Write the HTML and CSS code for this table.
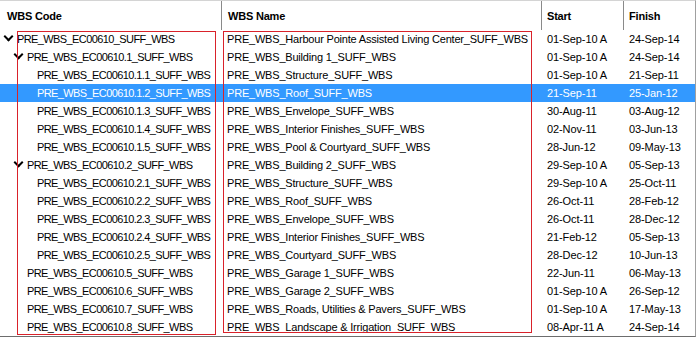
FILE: index.html
```html
<!DOCTYPE html>
<html>
<head>
<meta charset="utf-8">
<link rel="stylesheet" href="styles.css">
</head>
<body>
<div class="grid">
  <div class="head">
    <div class="hcell c1">WBS Code</div>
    <div class="hcell c2">WBS Name</div>
    <div class="hcell c3">Start</div>
    <div class="hcell c4">Finish</div>
  </div>
  <div class="body">
    <div class="row"><div class="cell code l0"><span class="chev"></span>PRE_WBS_EC00610_SUFF_WBS</div><div class="cell name">PRE_WBS_Harbour Pointe Assisted Living Center_SUFF_WBS</div><div class="cell date">01-Sep-10 A</div><div class="cell fin">24-Sep-14</div></div>
    <div class="row"><div class="cell code l1"><span class="chev"></span>PRE_WBS_EC00610.1_SUFF_WBS</div><div class="cell name">PRE_WBS_Building 1_SUFF_WBS</div><div class="cell date">01-Sep-10 A</div><div class="cell fin">24-Sep-14</div></div>
    <div class="row"><div class="cell code l2">PRE_WBS_EC00610.1.1_SUFF_WBS</div><div class="cell name">PRE_WBS_Structure_SUFF_WBS</div><div class="cell date">01-Sep-10 A</div><div class="cell fin">21-Sep-11</div></div>
    <div class="row sel"><div class="cell code l2">PRE_WBS_EC00610.1.2_SUFF_WBS</div><div class="cell name">PRE_WBS_Roof_SUFF_WBS</div><div class="cell date">21-Sep-11</div><div class="cell fin">25-Jan-12</div></div>
    <div class="row"><div class="cell code l2">PRE_WBS_EC00610.1.3_SUFF_WBS</div><div class="cell name">PRE_WBS_Envelope_SUFF_WBS</div><div class="cell date">30-Aug-11</div><div class="cell fin">03-Aug-12</div></div>
    <div class="row"><div class="cell code l2">PRE_WBS_EC00610.1.4_SUFF_WBS</div><div class="cell name">PRE_WBS_Interior Finishes_SUFF_WBS</div><div class="cell date">02-Nov-11</div><div class="cell fin">03-Jun-13</div></div>
    <div class="row"><div class="cell code l2">PRE_WBS_EC00610.1.5_SUFF_WBS</div><div class="cell name">PRE_WBS_Pool &amp; Courtyard_SUFF_WBS</div><div class="cell date">28-Jun-12</div><div class="cell fin">09-May-13</div></div>
    <div class="row"><div class="cell code l1"><span class="chev"></span>PRE_WBS_EC00610.2_SUFF_WBS</div><div class="cell name">PRE_WBS_Building 2_SUFF_WBS</div><div class="cell date">29-Sep-10 A</div><div class="cell fin">05-Sep-13</div></div>
    <div class="row"><div class="cell code l2">PRE_WBS_EC00610.2.1_SUFF_WBS</div><div class="cell name">PRE_WBS_Structure_SUFF_WBS</div><div class="cell date">29-Sep-10 A</div><div class="cell fin">25-Oct-11</div></div>
    <div class="row"><div class="cell code l2">PRE_WBS_EC00610.2.2_SUFF_WBS</div><div class="cell name">PRE_WBS_Roof_SUFF_WBS</div><div class="cell date">26-Oct-11</div><div class="cell fin">28-Feb-12</div></div>
    <div class="row"><div class="cell code l2">PRE_WBS_EC00610.2.3_SUFF_WBS</div><div class="cell name">PRE_WBS_Envelope_SUFF_WBS</div><div class="cell date">26-Oct-11</div><div class="cell fin">28-Dec-12</div></div>
    <div class="row"><div class="cell code l2">PRE_WBS_EC00610.2.4_SUFF_WBS</div><div class="cell name">PRE_WBS_Interior Finishes_SUFF_WBS</div><div class="cell date">21-Feb-12</div><div class="cell fin">05-Sep-13</div></div>
    <div class="row"><div class="cell code l2">PRE_WBS_EC00610.2.5_SUFF_WBS</div><div class="cell name">PRE_WBS_Courtyard_SUFF_WBS</div><div class="cell date">28-Dec-12</div><div class="cell fin">10-Jun-13</div></div>
    <div class="row"><div class="cell code l1">PRE_WBS_EC00610.5_SUFF_WBS</div><div class="cell name">PRE_WBS_Garage 1_SUFF_WBS</div><div class="cell date">22-Jun-11</div><div class="cell fin">06-May-13</div></div>
    <div class="row"><div class="cell code l1">PRE_WBS_EC00610.6_SUFF_WBS</div><div class="cell name">PRE_WBS_Garage 2_SUFF_WBS</div><div class="cell date">01-Sep-10 A</div><div class="cell fin">26-Sep-12</div></div>
    <div class="row"><div class="cell code l1">PRE_WBS_EC00610.7_SUFF_WBS</div><div class="cell name">PRE_WBS_Roads, Utilities &amp; Pavers_SUFF_WBS</div><div class="cell date">01-Sep-10 A</div><div class="cell fin">17-May-13</div></div>
    <div class="row"><div class="cell code l1">PRE_WBS_EC00610.8_SUFF_WBS</div><div class="cell name">PRE_WBS_Landscape &amp; Irrigation_SUFF_WBS</div><div class="cell date">08-Apr-11 A</div><div class="cell fin">24-Sep-14</div></div>
    <div class="mark mark-code"></div>
    <div class="mark mark-name"></div>
  </div>
</div>
</body>
</html>
```

FILE: styles.css
```css
* { box-sizing: border-box; }
html, body { margin: 0; padding: 0; background: #fff; }
body {
  width: 696px;
  height: 337px;
  overflow: hidden;
  font-family: "Liberation Sans", Arial, sans-serif;
  font-size: 11px;
  letter-spacing: -0.2px;
  color: #000;
}
.grid {
  width: 696px;
  height: 337px;
  border-top: 1px solid #d4d4d4;
  border-bottom: 1px solid #6d6d6d;
  border-right: 1px solid #a0a0a0;
  display: flex;
  flex-direction: column;
}
.head {
  display: grid;
  grid-template-columns: 222px 320px 82px 71px;
  height: 29px;
}
.hcell {
  font-weight: bold;
  display: flex;
  align-items: center;
  border-right: 1px solid #8a8a8a;
  padding-left: 7px;
  padding-top: 1px;
}
.hcell.c2 { padding-left: 6px; }
.hcell.c3 { padding-left: 5px; }
.hcell.c4 { border-right: none; padding-left: 5px; }
.body {
  position: relative;
  flex: 1;
}
.row {
  display: grid;
  grid-template-columns: 222px 320px 82px 71px;
  height: 18px;
  align-items: center;
  white-space: nowrap;
}
.row.sel { background: #3399ff; color: #fff; }
.cell { overflow: hidden; display: flex; align-items: center; height: 18px; }
.code { letter-spacing: -0.6px; }
.code.l0 { padding-left: 4px; }
.code.l1 { padding-left: 14px; }
.code.l2 { padding-left: 37px; }
.code.l1:not(:has(.chev)) { padding-left: 27px; }
.chev {
  width: 9px;
  height: 6px;
  margin-right: 4px;
  flex: none;
  position: relative;
}
.chev::before {
  content: "";
  position: absolute;
  left: 1px;
  top: -3px;
  width: 5px;
  height: 5px;
  border-right: 2px solid #000;
  border-bottom: 2px solid #000;
  transform: rotate(45deg);
}
.name { padding-left: 5px; letter-spacing: -0.2px; }
.date { padding-left: 5px; letter-spacing: -0.1px; }
.fin { padding-left: 5px; letter-spacing: -0.1px; }
.mark {
  position: absolute;
  border: 1px solid #d9222a;
  pointer-events: none;
}
.mark-code { left: 17px; top: 1px; width: 199px; height: 304px; }
.mark-name { left: 223px; top: 1px; width: 309px; height: 302px; }
```
